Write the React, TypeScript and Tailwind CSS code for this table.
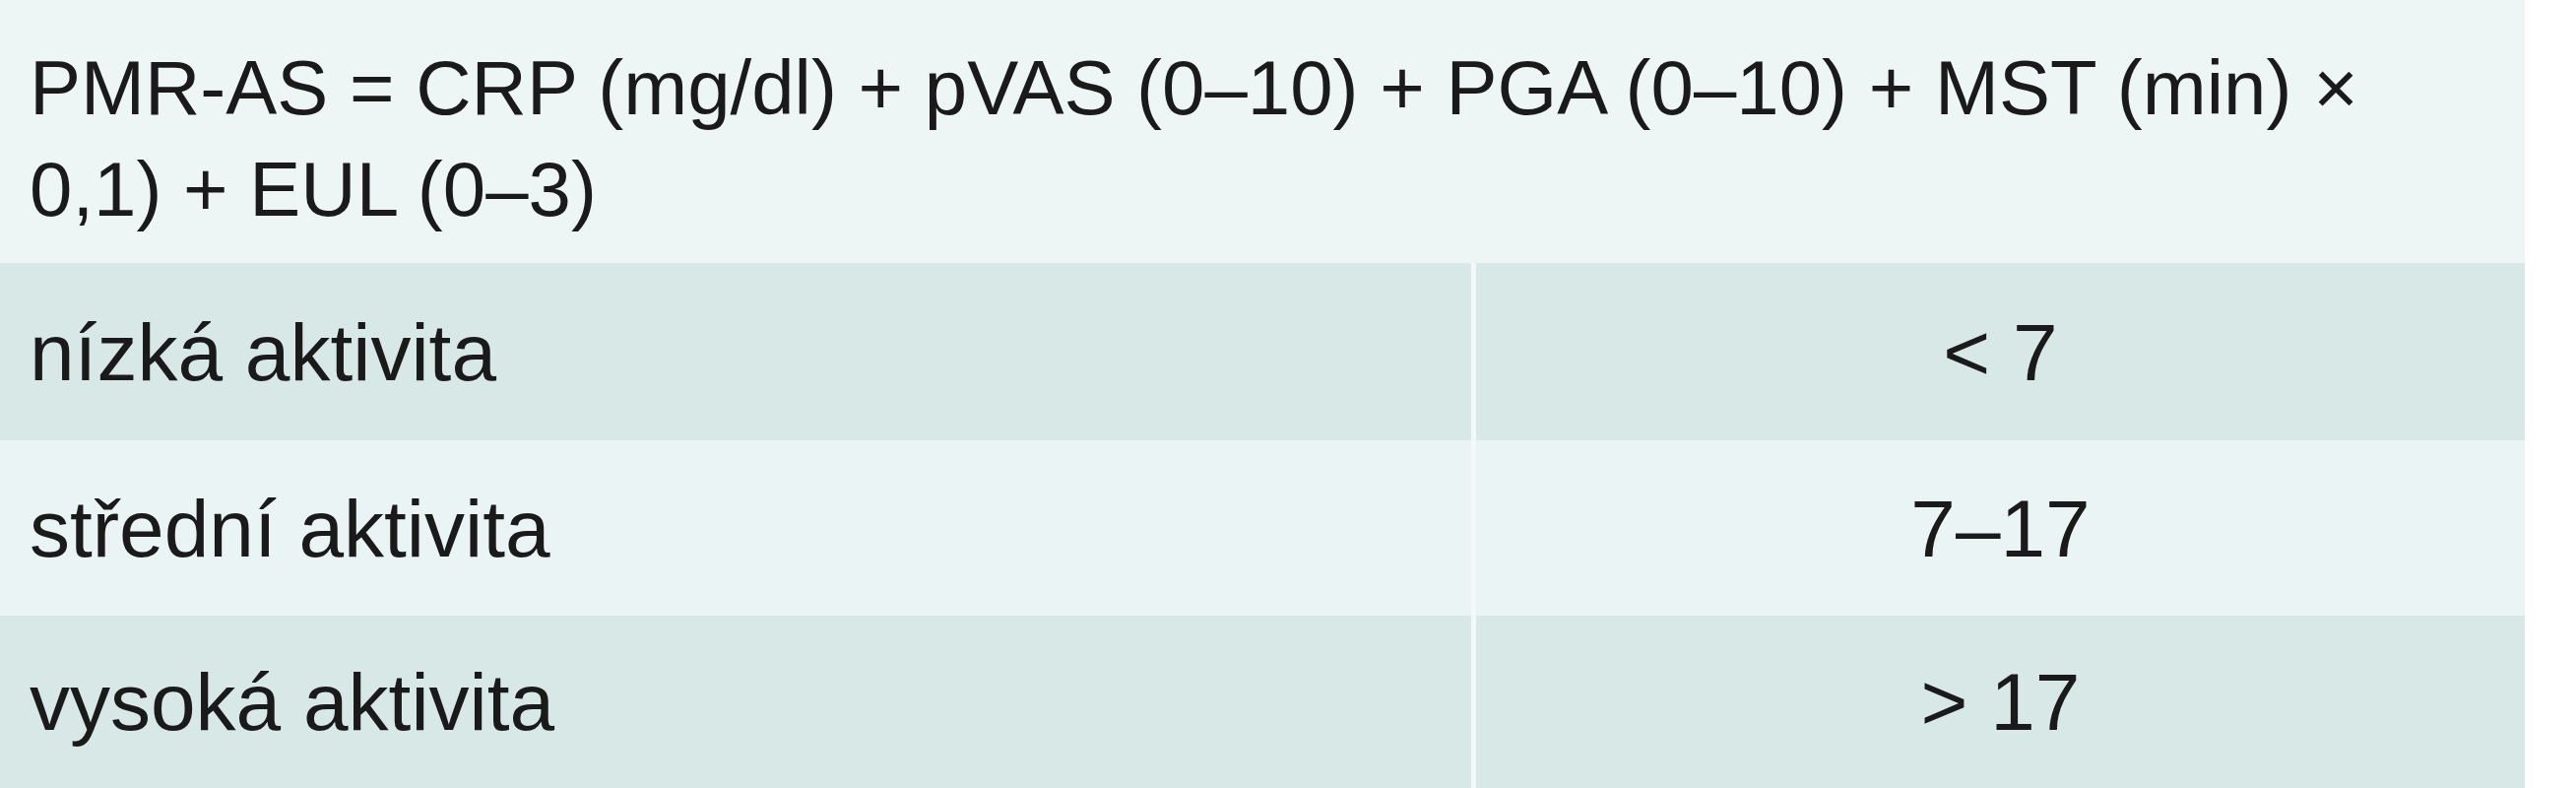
const rows = [
  { label: "nízká aktivita", value: "< 7", bg: "bg-[#d7e8e7]", h: "h-[180px]" },
  { label: "střední aktivita", value: "7–17", bg: "bg-[#eaf4f4]", h: "h-[178px]" },
  { label: "vysoká aktivita", value: "> 17", bg: "bg-[#d7e8e7]", h: "h-[175px]" },
];

export default function App() {
  return (
    <div className="w-[2616px] h-[800px] bg-white text-[#1a1a1a] font-['Liberation_Sans',sans-serif]">
      <div className="w-[2564px]">
        <div className="h-[267px] bg-[#edf5f5] pl-[30px] pt-[38px] text-[78px] leading-[103px]">
          PMR-AS = CRP (mg/dl) + pVAS (0–10) + PGA (0–10) + MST (min) ×
          <br />
          0,1) + EUL (0–3)
        </div>
        {rows.map((row) => (
          <div key={row.label} className={`flex ${row.bg} ${row.h} text-[82px]`}>
            <div className="w-[1499px] flex items-center pl-[30px] border-r-[5px] border-[#f1f9f9]">
              {row.label}
            </div>
            <div className="flex-1 flex items-center justify-center">{row.value}</div>
          </div>
        ))}
      </div>
    </div>
  );
}
